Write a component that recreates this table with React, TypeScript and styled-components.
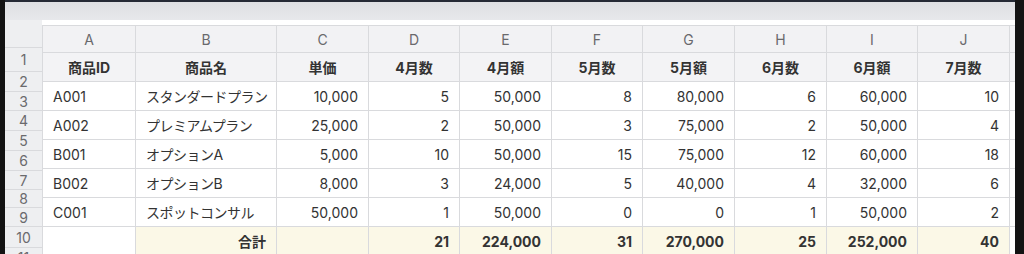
import React from 'react';
import styled, { createGlobalStyle } from 'styled-components';

const GlobalStyle = createGlobalStyle`
  html, body {
    margin: 0;
    padding: 0;
    background: #131313;
    overflow: hidden;
  }
`;

const Window = styled.div`
  margin-left: 5px;
  width: 1010px;
  height: 254px;
  overflow: hidden;
  border-top: 2px solid #252a35;
  background: #ffffff;
  font-family: Inter, 'Noto Sans CJK JP', sans-serif;
  font-size: 14px;
  color: #333333;
`;

const Toolbar = styled.div`
  height: 18px;
  background: linear-gradient(#dedfe2, #e7e8eb);
`;

const Sheet = styled.div`
  display: flex;
`;

const RowHeaderCol = styled.div`
  width: 37px;
  flex: none;
  display: flex;
  flex-direction: column;
  background: #eeeff1;
`;

const RowNum = styled.div<{ h: number }>`
  height: ${(p) => p.h}px;
  flex: none;
  box-sizing: border-box;
  border-bottom: 1px solid #d9dadd;
  display: flex;
  align-items: center;
  justify-content: center;
  color: #6a6a6d;
  font-size: 14px;
`;

const GridWrap = styled.div`
  flex: 1;
  padding-top: 5px;
  background: #ffffff;
`;

const Grid = styled.div`
  display: grid;
  grid-template-columns: 93px 141px 92px 91px 92px 91px 92px 92px 91px 92px 20px;
  grid-auto-rows: 29px;
  grid-template-rows: 27px;
  border-top: 1px solid #d9dadd;
  border-left: 1px solid #d9dadd;
`;

const ColLetter = styled.div`
  box-sizing: border-box;
  border-right: 1px solid #d9dadd;
  border-bottom: 1px solid #d9dadd;
  background: #f2f2f4;
  color: #69696c;
  display: flex;
  align-items: center;
  justify-content: center;
`;

const Cell = styled.div<{
  align?: 'left' | 'right' | 'center';
  bold?: boolean;
  tight?: boolean;
  bg?: string;
}>`
  box-sizing: border-box;
  border-right: 1px solid #d9dadd;
  border-bottom: 1px solid #d9dadd;
  background: ${(p) => p.bg || '#ffffff'};
  font-weight: ${(p) => (p.bold ? 700 : 400)};
  letter-spacing: ${(p) => (p.tight ? '-0.5px' : 'normal')};
  display: flex;
  align-items: center;
  padding: 0 10px;
  white-space: nowrap;
  overflow: hidden;
  justify-content: ${(p) =>
    p.align === 'right' ? 'flex-end' : p.align === 'center' ? 'center' : 'flex-start'};
`;

const letters = ['A', 'B', 'C', 'D', 'E', 'F', 'G', 'H', 'I', 'J', ''];
const headers = ['商品ID', '商品名', '単価', '4月数', '4月額', '5月数', '5月額', '6月数', '6月額', '7月数', ''];

const rows = [
  ['A001', 'スタンダードプラン', '10,000', '5', '50,000', '8', '80,000', '6', '60,000', '10'],
  ['A002', 'プレミアムプラン', '25,000', '2', '50,000', '3', '75,000', '2', '50,000', '4'],
  ['B001', 'オプションA', '5,000', '10', '50,000', '15', '75,000', '12', '60,000', '18'],
  ['B002', 'オプションB', '8,000', '3', '24,000', '5', '40,000', '4', '32,000', '6'],
  ['C001', 'スポットコンサル', '50,000', '1', '50,000', '0', '0', '1', '50,000', '2'],
];

const totals = ['', '合計', '', '21', '224,000', '31', '270,000', '25', '252,000', '40'];

const rowHeights = [28, 24, 20, 19, 20, 20, 20, 19, 18, 19, 21, 20];

const TOTAL_BG = '#fbf8e7';
const HEAD_BG = '#f3f3f5';

const App: React.FC = () => {
  return (
    <>
      <GlobalStyle />
      <Window>
        <Toolbar />
        <Sheet>
          <RowHeaderCol>
            {rowHeights.map((h, i) => (
              <RowNum key={i} h={h}>
                {i === 0 ? '' : i}
              </RowNum>
            ))}
          </RowHeaderCol>
          <GridWrap>
            <Grid>
              {letters.map((l, i) => (
                <ColLetter key={'l' + i}>{l}</ColLetter>
              ))}
              {headers.map((h, i) => (
                <Cell key={'h' + i} align="center" bold bg={HEAD_BG}>
                  {h}
                </Cell>
              ))}
              {rows.map((r, ri) => (
                <React.Fragment key={ri}>
                  {r.map((v, ci) => (
                    <Cell key={ci} align={ci < 2 ? 'left' : 'right'} tight={ci === 1}>
                      {v}
                    </Cell>
                  ))}
                  <Cell />
                </React.Fragment>
              ))}
              {totals.map((v, ci) => (
                <Cell key={'t' + ci} align="right" bold bg={ci === 0 ? '#ffffff' : TOTAL_BG}>
                  {v}
                </Cell>
              ))}
              <Cell />
            </Grid>
          </GridWrap>
        </Sheet>
      </Window>
    </>
  );
};

export default App;
